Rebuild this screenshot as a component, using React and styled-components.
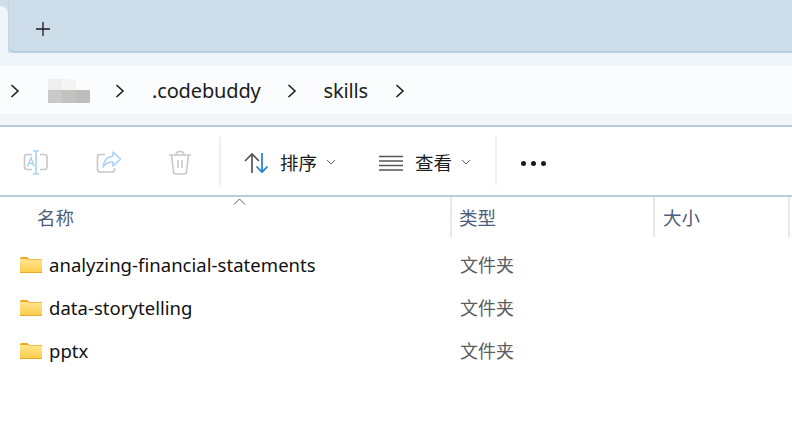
import React from 'react';
import styled, { createGlobalStyle } from 'styled-components';

const Global = createGlobalStyle`
  html, body { margin: 0; padding: 0; background: #fff; }
  body { width: 792px; height: 444px; overflow: hidden; font-family: "Noto Sans", "Noto Sans CJK SC", sans-serif; }
`;
const Page = styled.div`width: 792px; height: 444px; display: flex; flex-direction: column; background: #fff; overflow: hidden;`;
const TabBar = styled.div`height: 53px; flex: none; box-sizing: border-box; background: #cddde9; display: flex;`;
const ActiveTab = styled.div`width: 8px; flex: none; margin-top: 6px; background: #f0f5f9; border-top-right-radius: 8px;`;
const TabStrip = styled.div`flex: 1; background: #cddde9; border-bottom: 2px solid #bccfde; border-left: 1px solid #c3d5e3; border-bottom-left-radius: 8px; display: flex; align-items: flex-start; padding: 21px 0 0 26px;`;
const AddressGap = styled.div`height: ${p => p.$h}px; flex: none; background: #f0f5f9;`;
const Address = styled.div`height: 48px; flex: none; background: #fbfcfe; display: flex; align-items: center; position: relative;`;
const Crumb = styled.span`font-size: 20px; color: #1c1c1c; letter-spacing: -0.15px; margin-left: ${p => p.$ml}px; line-height: 48px; padding-top: 2px;`;
const Chevron = styled.svg`width: 10px; height: 16px; flex: none; margin-left: ${p => p.$ml}px; fill: none; stroke: #1e1e1e; stroke-width: 1.6; margin-top: 1px;`;
const Blur = styled.div`display: grid; grid-template-columns: 14px 14px 14px; grid-template-rows: 11px 13px; margin-left: ${p => p.$ml}px; margin-top: 2px; flex: none;`;
const BlurCell = styled.i`display: block; background: ${p => p.$c};`;
const Rule = styled.div`height: 2px; flex: none; background: #b9cbdb;`;
const Toolbar = styled.div`height: 68px; flex: none; display: flex; align-items: center; box-sizing: border-box; padding-top: 4px;`;
const IconSlot = styled.div`flex: none; width: ${p => p.$w}px; margin-left: ${p => p.$ml || 0}px; display: flex; align-items: center; justify-content: center;`;
const Divider = styled.div`width: 2px; height: 48px; flex: none; background: #eeeff0; margin-left: ${p => p.$ml}px; margin-top: -4px;`;
const Command = styled.div`display: flex; align-items: center; flex: none; margin-left: ${p => p.$ml}px;`;
const CommandLabel = styled.span`font-size: 18.5px; color: #1c1c1c; margin-left: ${p => p.$ml}px; line-height: 24px;`;
const Caret = styled.svg`width: 10px; height: 6px; margin-left: 9px; fill: none; stroke: #666; stroke-width: 1; margin-top: -2px;`;
const Dots = styled.div`display: flex; gap: 5px; margin-left: 24px;`;
const Dot = styled.i`width: 5px; height: 5px; border-radius: 50%; background: #1c1c1c; display: block;`;
const HeaderRow = styled.div`height: 40px; flex: none; display: flex; position: relative;`;
const HeaderCell = styled.div`box-sizing: border-box; width: ${p => p.$w}px; padding-left: ${p => p.$pl}px; padding-top: 9px; font-size: 18.5px; line-height: 24px; color: #4c607a; flex: none; border-right: ${p => p.$edge ? '2px solid #e6e8ea' : 'none'};`;
const SortCaret = styled.svg`position: absolute; left: 233px; top: 1px; width: 13px; height: 7px; fill: none; stroke: #5a5a5a; stroke-width: 1;`;
const List = styled.div`display: flex; flex-direction: column; padding-top: 6px;`;
const Row = styled.div`height: 43px; display: flex; align-items: center; position: relative;`;
const NameCell = styled.div`width: 451px; flex: none; display: flex; align-items: center; padding-left: 20px; box-sizing: border-box;`;
const Name = styled.span`font-size: 18.5px; color: #111; margin-left: 7px; line-height: 24px; letter-spacing: 0.04px;`;
const TypeCell = styled.div`padding-left: 9px; font-size: 18px; color: #5c5c5c; line-height: 24px;`;

const Folder = () => (
  <svg width="22" height="18" viewBox="0 0 22 18">
    <defs>
      <linearGradient id="folderFill" x1="0" y1="0" x2="0" y2="1">
        <stop offset="0" stopColor="#ffe692" />
        <stop offset="1" stopColor="#fccb45" />
      </linearGradient>
    </defs>
    <path d="M0 2.5Q0 1 1.5 1H7L9.5 3H0Z" fill="#f0a81f" />
    <path d="M0 3H20.5Q22 3 22 4.5V16Q22 17 21 17H1Q0 17 0 16Z" fill="url(#folderFill)" />
    <path d="M0 4H22V3H9L7 4Z" fill="#f3bd45" />
    <path d="M0 16.5H22" stroke="#eda92a" strokeWidth="1" />
  </svg>
);
const Chev = ({ ml }) => (
  <Chevron $ml={ml} viewBox="0 0 10 16"><path d="M1.5 2L8 8L1.5 14" /></Chevron>
);
const RenameIcon = () => (
  <svg width="26" height="26" viewBox="0 0 26 26" fill="none">
    <path d="M9 4.5H4Q1.5 4.5 1.5 7V17Q1.5 19.5 4 19.5H9" stroke="#c8c8c8" strokeWidth="1.6" />
    <path d="M17 4.5H21.5Q24 4.5 24 7V17Q24 19.5 21.5 19.5H17" stroke="#c8c8c8" strokeWidth="1.6" />
    <path d="M13 1V24M10 1H16M10 24H16" stroke="#a9d3f5" strokeWidth="1.6" />
    <path d="M4.5 16.5L8 7.5L11 16.5M5.8 13.5H10" stroke="#a9d3f5" strokeWidth="1.4" />
  </svg>
);
const ShareIcon = () => (
  <svg width="26" height="26" viewBox="0 0 26 26" fill="none">
    <path d="M9 4.5H4Q1.5 4.5 1.5 7V19Q1.5 22 4 22H16Q18.5 22 18.5 19.5V18" stroke="#c8c8c8" strokeWidth="1.6" />
    <path d="M17 2L24.5 9L17 16V12Q10.5 11.5 7 17Q8 7.5 17 6Z" stroke="#a9d3f5" strokeWidth="1.6" strokeLinejoin="round" />
  </svg>
);
const TrashIcon = () => (
  <svg width="24" height="26" viewBox="0 0 24 26" fill="none" stroke="#c8c8c8" strokeWidth="1.6">
    <path d="M1 5H23M8 5Q8 1.5 12 1.5Q16 1.5 16 5" />
    <path d="M3.5 5L5.5 22Q5.7 24 8 24H16Q18.3 24 18.5 22L20.5 5" />
    <path d="M10 10V18M14 10V18" />
  </svg>
);
const SortIcon = () => (
  <svg width="26" height="22" viewBox="0 0 26 22" fill="none" strokeWidth="1.7">
    <path d="M8 21V2M1 9L8 2L15 9" stroke="#555" />
    <path d="M18 1V20M12.5 14.5L18 20L23.5 14.5" stroke="#1a7fd4" />
  </svg>
);
const ListIcon = () => (
  <svg width="24" height="16" viewBox="0 0 24 16" fill="none" stroke="#555" strokeWidth="1.5">
    <path d="M0 1.5H24M0 6H24M0 10.5H24M0 15H24" />
  </svg>
);
const DownCaret = () => (
  <Caret viewBox="0 0 10 6"><path d="M1 1L5 5L9 1" /></Caret>
);

const folders = ['analyzing-financial-statements', 'data-storytelling', 'pptx'];
const blurCells = ['#eeeeee', '#f5f5f5', '#fcfcfc', '#c9c9c9', '#c2c2c0', '#bdbdbd'];

export default function App() {
  return (
    <Page>
      <Global />
      <TabBar>
        <ActiveTab />
        <TabStrip>
          <svg width="16" height="16" viewBox="0 0 16 16" fill="none" stroke="#1c1c1c" strokeWidth="1.3">
            <path d="M8 1V15M1 8H15" />
          </svg>
        </TabStrip>
      </TabBar>
      <AddressGap $h={13} />
      <Address>
        <Chev ml={10} />
        <Blur $ml={28}>{blurCells.map((c, i) => <BlurCell key={i} $c={c} />)}</Blur>
        <Chev ml={25} />
        <Crumb $ml={27}>.codebuddy</Crumb>
        <Chev ml={26} />
        <Crumb $ml={27}>skills</Crumb>
        <Chev ml={27} />
      </Address>
      <AddressGap $h={11} />
      <Rule />
      <Toolbar>
        <IconSlot $w={26} $ml={23}><RenameIcon /></IconSlot>
        <IconSlot $w={26} $ml={47}><ShareIcon /></IconSlot>
        <IconSlot $w={24} $ml={46}><TrashIcon /></IconSlot>
        <Divider $ml={27} />
        <Command $ml={23}>
          <SortIcon />
          <CommandLabel $ml={10}>排序</CommandLabel>
          <DownCaret />
        </Command>
        <Command $ml={43}>
          <ListIcon />
          <CommandLabel $ml={12}>查看</CommandLabel>
          <DownCaret />
        </Command>
        <Divider $ml={24} />
        <Dots><Dot /><Dot /><Dot /></Dots>
      </Toolbar>
      <Rule />
      <HeaderRow>
        <HeaderCell $w={452} $pl={37} $edge>名称</HeaderCell>
        <HeaderCell $w={203} $pl={7} $edge>类型</HeaderCell>
        <HeaderCell $w={135} $pl={8} $edge>大小</HeaderCell>
        <SortCaret viewBox="0 0 13 7"><path d="M1 6.5L6.5 1L12 6.5" /></SortCaret>
      </HeaderRow>
      <List>
        {folders.map(f => (
          <Row key={f}>
            <NameCell><Folder /><Name>{f}</Name></NameCell>
            <TypeCell>文件夹</TypeCell>
          </Row>
        ))}
      </List>
    </Page>
  );
}
